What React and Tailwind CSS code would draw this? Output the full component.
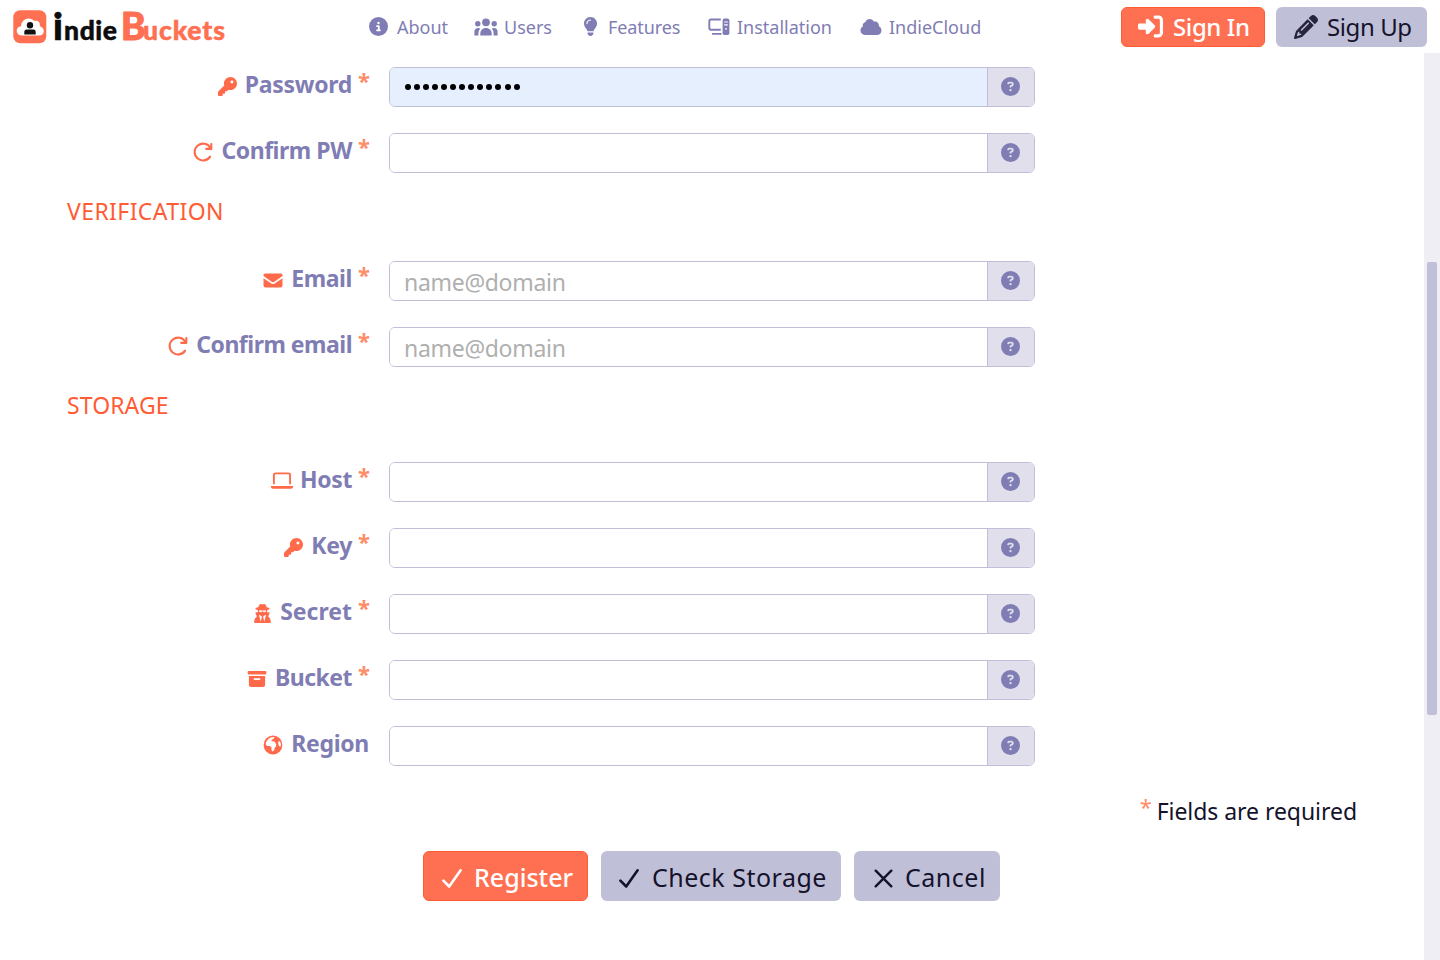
import React from "react";
import {
  FaCircleInfo, FaLightbulb, FaRightToBracket, FaPencil,
  FaKey, FaUserSecret, FaCircleQuestion,
} from "react-icons/fa6";

const Redo = ({ className }) => (
  <svg viewBox="0 0 20 20" className={className} fill="none" stroke="currentColor" strokeWidth="2.1" strokeLinecap="round">
    <path d="M17.1 14.6A8.4 8.4 0 1 1 17.4 6" />
    <path d="M18.3 2V6.9H13.2" strokeLinejoin="round" />
  </svg>
);

const Computer = ({ className }) => (
  <svg viewBox="0 0 22 18" className={className} fill="none" stroke="currentColor" strokeWidth="1.9">
    <path d="M12.8 1.5H3Q1.3 1.5 1.3 3.2V9.8Q1.3 11.8 3 11.8H12.8" />
    <path d="M4.8 15.9H12.8" strokeLinecap="round" />
    <rect x="14.6" y="0.6" width="6.8" height="16.4" rx="1.8" fill="currentColor" stroke="none" />
    <path d="M16.2 4H19.8M16.2 6.9H19.8" stroke="#fff" strokeWidth="1.1" />
    <circle cx="18" cy="10.8" r=".9" fill="#fff" stroke="none" />
  </svg>
);

const People = ({ className }) => (
  <svg viewBox="0 0 24 18" className={className} fill="currentColor">
    <circle cx="12" cy="4.3" r="3.9" />
    <circle cx="3.8" cy="5.7" r="2.7" />
    <circle cx="20.2" cy="5.7" r="2.7" />
    <path d="M6.3 17.2V15.6C6.3 12.3 8.7 10 12 10S17.7 12.3 17.7 15.6V17.2Q17.7 17.4 17.2 17.4H6.8Q6.3 17.4 6.3 17.2Z" />
    <path d="M.4 17.4V13.6C.4 11.2 2 9.9 4.2 9.9Q5.5 9.9 6.3 10.5Q4.4 12.5 4.4 15.6V17.4Z" />
    <path d="M23.6 17.4V13.6C23.6 11.2 22 9.9 19.8 9.9Q18.5 9.9 17.7 10.5Q19.6 12.5 19.6 15.6V17.4Z" />
  </svg>
);

const Cloud = ({ className }) => (
  <svg viewBox="0 0 22 18" className={className} fill="currentColor">
    <path d="M5 17C2.3 17 .5 15 .5 12.6C.5 10.6 1.3 9.1 2.8 8.4C2.6 7.5 2.6 6.6 3.3 5.6C4 4.6 4.8 4.3 5.4 4C6.3 2 7.6.9 9.6.9C11.6.9 13.1 1.9 13.9 3.5C16.9 2.9 19.3 5.2 18.9 8.2C20.6 9 21.5 10.5 21.5 12.4C21.5 15 19.6 17 17 17Z" />
  </svg>
);

const Archive = ({ className }) => (
  <svg viewBox="0 0 20 18" className={className} fill="currentColor">
    <rect x=".7" y=".9" width="18.6" height="3.5" rx="1" />
    <path fillRule="evenodd" d="M1.9 6H18.1V14.9Q18.1 17 16 17H4Q1.9 17 1.9 14.9ZM7.4 8.3Q6.5 8.3 6.5 9.1T7.4 9.9H12.6Q13.5 9.9 13.5 9.1T12.6 8.3Z" />
  </svg>
);

const Globe = ({ className }) => (
  <svg viewBox="0 0 20 20" className={className}>
    <circle cx="10" cy="10" r="9.4" fill="currentColor" />
    <path fill="#fff" d="M3.4 6.6L5.6 3.8L8.2 2.3L11.6 2L10.4 4.1L8.4 4.9L8.6 6.2L11.4 6.6L13.3 9.2L12.9 11.6L11.6 13L11.2 15.2L9.6 16.6L8.4 15L8.5 12.3L6.7 11.1L4 10.9L2.6 9Z" />
    <path fill="#fff" d="M15 7L16.9 6L18 9.2L17.4 12L15.8 10.6Z" />
  </svg>
);

const Mail = ({ className }) => (
  <svg viewBox="0 0 20 15" className={className} fill="currentColor">
    <path d="M2 .5H18Q19.5.5 19.5 2V3L11 8.9Q10 9.5 9 8.9L.5 3V2Q.5.5 2 .5Z" />
    <path d="M.5 5.2L8.3 10.5Q10 11.5 11.7 10.5L19.5 5.2V12.5Q19.5 14.5 17.5 14.5H2.5Q.5 14.5.5 12.5Z" />
  </svg>
);

const Laptop = ({ className }) => (
  <svg viewBox="0 0 24 18" className={className} fill="none" stroke="currentColor" strokeWidth="1.9">
    <path d="M3.9 12.2V3Q3.9 1.4 5.5 1.4H18.5Q20.1 1.4 20.1 3V12.2" />
    <path d="M.8 14H23.2Q23.2 16.8 20.9 16.8H3.1Q.8 16.8.8 14Z" fill="currentColor" stroke="none" />
  </svg>
);

const Check = ({ className }) => (
  <svg viewBox="0 0 20 20" className={className} fill="none" stroke="currentColor" strokeWidth="2.6" strokeLinecap="round" strokeLinejoin="round">
    <path d="M1.4 12.2L7.2 18L18.6 1.8" />
  </svg>
);

const Cross = ({ className }) => (
  <svg viewBox="0 0 18 18" className={className} fill="none" stroke="currentColor" strokeWidth="2.3" strokeLinecap="round">
    <path d="M1.6 1.6L16.4 16.4M16.4 1.6L1.6 16.4" />
  </svg>
);

const Brand = () => (
  <div className="flex h-8 w-[369px] shrink-0 items-center pl-[13px]">
    <svg viewBox="0 0 34 34" className="h-[34px] w-[34px] shrink-0">
      <rect x=".3" y=".3" width="33" height="33" rx="7" fill="#ff7052" />
      <path d="M9.5 25.6C1.8 25.6 2.2 16.2 8.1 16.2C8 8.6 17.5 5.9 21.3 11.1C25.6 9.9 27.5 13.2 26.8 16.2C32.2 17.2 32.3 25.6 26.2 25.6Z" fill="#fff" />
      <circle cx="17" cy="15.3" r="3.2" fill="#111" />
      <path d="M11.3 24.4V21.7Q11.3 19.4 13.6 19.4H20.4Q22.7 19.4 22.7 21.7V24.4Z" fill="#111" />
    </svg>
    <div className="mt-[2px] ml-[6px] flex items-baseline font-['Lato',sans-serif] font-black leading-8 text-[#0d0d0d]">
      <span className="w-[11px] text-[38px] [-webkit-text-stroke:0.7px_#0d0d0d]">i</span>
      <span className="w-[57px] text-[26.5px] tracking-[0.6px] [-webkit-text-stroke:0.5px_#0d0d0d]">ndie</span>
      <span className="w-[22px] text-[37px] text-[#ff7052] [-webkit-text-stroke:1px_#ff7052]">B</span>
      <span className="text-[26.5px] tracking-[0.9px] text-[#ff7052] [-webkit-text-stroke:0.5px_#ff7052]">uckets</span>
    </div>
  </div>
);

const NavItem = ({ icon, label, width, track = "" }) => (
  <a className={`flex shrink-0 items-center ${width}`}>
    {icon}
    <span className={`mt-[2px] whitespace-nowrap ${track}`}>{label}</span>
  </a>
);

const Field = ({ icon, label, track = "tracking-[-0.3px]", gap = "mr-[8px]", required = true, value, placeholder }) => (
  <div className="flex h-10">
    <label className="flex h-[35px] w-[369px] shrink-0 items-center justify-end text-[23px] font-bold text-[#7f7db3]">
      <span className={`mt-[3px] flex text-[#ff6a4a] ${gap}`}>{icon}</span>
      <span className={`whitespace-nowrap ${track}`}>{label}</span>
      {required && <span className="mb-[9px] ml-[6px] w-[11px] text-[22px] text-[#ff8c66]">*</span>}
    </label>
    <div className="ml-5 flex w-[646px] overflow-hidden rounded-md border border-[#c0bfd8]">
      <div className={`flex flex-1 items-center pl-[14px] text-[23px] ${value ? "bg-[#e6effe]" : "bg-white"}`}>
        {value && (
          <span className="ml-[1px] flex gap-[3.05px]">
            {Array.from({ length: value }, (_, i) => <i key={i} className="h-[6px] w-[6px] rounded-full bg-black" />)}
          </span>
        )}
        {placeholder && <span className="mt-[2px] tracking-[-0.3px] text-[#afafaf]">{placeholder}</span>}
      </div>
      <div className="flex w-[47px] items-center justify-center border-l border-[#c0bfd8] bg-[#e0dfeb]">
        <FaCircleQuestion className="mr-[1px] mb-[1px] h-[19px] w-[19px] text-[#7f7db3]" />
      </div>
    </div>
  </div>
);

const Heading = ({ children, track }) => (
  <h2 className={`flex h-8 items-center pl-[67px] text-[23px] text-[#ff5c35] ${track}`}>{children}</h2>
);

export default function App() {
  return (
    <div className="flex h-[960px] w-[1440px] flex-col overflow-hidden bg-white font-['Noto_Sans',sans-serif]">
      <header className="flex h-[53px] shrink-0 items-center">
        <Brand />
        <nav className="flex flex-1 text-[18px] text-[#7f7db3]">
          <NavItem width="w-[105px]" label="About" icon={<FaCircleInfo className="mr-[9px] h-[19px] w-[19px]" />} />
          <NavItem width="w-[108px]" label="Users" icon={<People className="mr-[6px] h-[18px] w-6" />} />
          <NavItem width="w-[126px]" label="Features" track="tracking-[-0.1px]" icon={<FaLightbulb className="mr-[9px] h-[19px] w-[17px]" />} />
          <NavItem width="w-[152px]" label="Installation" icon={<Computer className="mr-[7px] h-[18px] w-[22px]" />} />
          <NavItem width="w-[125px]" label="IndieCloud" icon={<Cloud className="mr-[7px] h-[18px] w-[22px]" />} />
        </nav>
        <div className="mr-[13px] flex gap-[11px] text-[24px]">
          <button className="flex h-10 w-[144px] items-center rounded-md border border-[#ff5c35] bg-[#ff7052] pl-[16px] font-medium text-white">
            <FaRightToBracket className="mr-[10px] h-[25px] w-[25px]" />
            <span className="whitespace-nowrap tracking-[-0.4px]">Sign In</span>
          </button>
          <button className="flex h-10 w-[151px] items-center rounded-md bg-[#c0bfd8] pl-[18px] text-[#14132b]">
            <FaPencil className="mr-[9px] h-6 w-6 text-[#26253d]" />
            <span className="whitespace-nowrap tracking-[-0.4px]">Sign Up</span>
          </button>
        </div>
      </header>
      <div className="flex min-h-0 flex-1">
        <main className="flex w-[1424px] flex-col pt-[14px]">
          <section className="flex flex-col gap-[26px]">
            <Field label="Password" value={13} icon={<FaKey className="h-[19px] w-[19px]" />} />
            <Field label="Confirm PW" track="tracking-[-0.45px]" icon={<Redo className="h-5 w-5" />} />
          </section>
          <div className="mt-[22px]"><Heading track="tracking-[0.4px]">VERIFICATION</Heading></div>
          <section className="mt-[34px] flex flex-col gap-[26px]">
            <Field label="Email" track="tracking-[-0.4px]" placeholder="name@domain" icon={<Mail className="h-[15px] w-5" />} />
            <Field label="Confirm email" track="tracking-[-0.5px]" placeholder="name@domain" icon={<Redo className="h-5 w-5" />} />
          </section>
          <div className="mt-[22px]"><Heading track="tracking-[0.1px]">STORAGE</Heading></div>
          <section className="mt-[41px] flex flex-col gap-[26px]">
            <Field label="Host" gap="mr-[6px]" track="tracking-[-0.4px]" icon={<Laptop className="h-[18px] w-6" />} />
            <Field label="Key" icon={<FaKey className="h-[19px] w-[19px]" />} />
            <Field label="Secret" track="tracking-[0px]" gap="mr-[9px]" icon={<FaUserSecret className="h-[19px] w-[17px]" />} />
            <Field label="Bucket" track="tracking-[-0.5px]" icon={<Archive className="h-[18px] w-5" />} />
            <Field label="Region" required={false} icon={<Globe className="h-5 w-5" />} />
          </section>
          <p className="mt-[29px] flex h-8 items-center justify-end pr-[67px] text-[23px] text-[#14132b]">
            <span className="mb-[9px] mr-[6px] w-[11px] text-[22px] text-[#ff8c66]">*</span>
            <span className="tracking-[-0.05px]">Fields are required</span>
          </p>
          <div className="mt-[24px] flex gap-[13px] pl-[423px] text-[25px] text-[#14132b]">
            <button className="flex h-[50px] w-[165px] items-center rounded-md border border-[#ff5c35] bg-[#ff7052] pl-[18px] font-medium text-white">
              <Check className="mt-1 mr-[12px] h-[21px] w-5" /><span className="mt-1 whitespace-nowrap">Register</span>
            </button>
            <button className="flex h-[50px] w-[240px] items-center rounded-md bg-[#c0bfd8] pl-[18px]">
              <Check className="mt-1 mr-[13px] h-[21px] w-5" /><span className="mt-1 whitespace-nowrap tracking-[0.5px]">Check Storage</span>
            </button>
            <button className="flex h-[50px] w-[146px] items-center rounded-md bg-[#c0bfd8] pl-[20px]">
              <Cross className="mt-1 mr-[12px] h-[19px] w-[19px]" /><span className="mt-1 whitespace-nowrap tracking-[0.5px]">Cancel</span>
            </button>
          </div>
        </main>
        <aside className="w-4 bg-[#efeef4] pt-[209px] pl-[3px]">
          <div className="h-[453px] w-[10px] rounded-[2px] bg-[#c0bfd8]" />
        </aside>
      </div>
    </div>
  );
}
